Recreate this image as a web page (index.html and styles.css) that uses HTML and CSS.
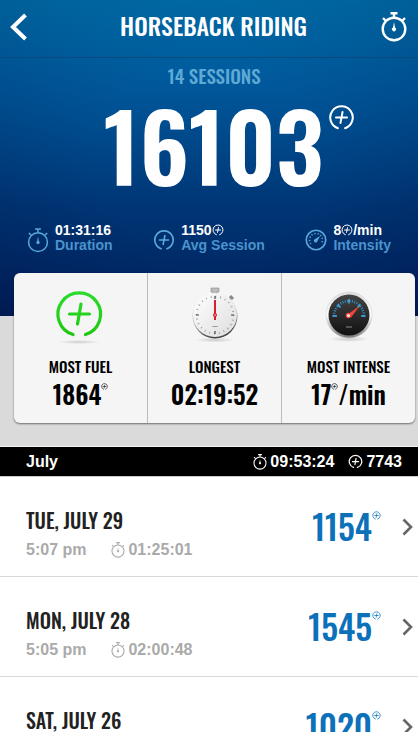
FILE: index.html
```html
<!DOCTYPE html>
<html lang="en">
<head>
    <meta charset="UTF-8">
    <meta name="viewport" content="width=device-width, initial-scale=1.0">
    <title>Horseback Riding</title>
    <link rel="stylesheet" href="styles.css">
</head>
<body>
    <!-- Shared icons -->
    <svg class="icon-defs" width="0" height="0" aria-hidden="true">
        <symbol id="fuel" viewBox="0 0 24 24">
            <path d="M8.8 21.5A10 10 0 1 1 15.2 21.5M12.9 7.2L11.1 16.8M7.1 12H16.9" fill="none" stroke="currentColor" stroke-linecap="round"/>
        </symbol>
        <symbol id="timer" viewBox="0 0 26 30">
            <circle cx="13" cy="17" r="11.3" fill="none" stroke="currentColor"/>
            <path d="M9.5 1.2H16.5M13 1.5V5M4.5 8.5L2 6M21.5 8.5L24 6" fill="none" stroke="currentColor"/>
            <path d="M13 10L14 15.5A2 2 0 1 1 12 15.5Z" fill="currentColor" stroke="none"/>
        </symbol>
        <symbol id="gauge" viewBox="0 0 24 24">
            <circle cx="12" cy="12" r="10.6" fill="none" stroke="currentColor" stroke-width="1.8"/>
            <path d="M6.5 16.2A7 7 0 1 1 17.5 16.2" fill="none" stroke="currentColor" stroke-width="1.8" stroke-dasharray="1.3 2.1"/>
            <path d="M16.5 7.5L13.6 13.2A2 2 0 1 1 11 10.8Z" fill="currentColor"/>
        </symbol>
    </svg>

    <div class="hero">
        <div class="header">
            <button class="icon-button" type="button" aria-label="Back">
                <svg width="18" height="28" viewBox="0 0 18 28"><path d="M15.5 2L3 14L15.5 26" fill="none" stroke="currentColor" stroke-width="4"/></svg>
            </button>
            <h1>HORSEBACK RIDING</h1>
            <button class="icon-button" type="button" aria-label="Start timer">
                <svg class="timer-large" width="26" height="30"><use href="#timer"/></svg>
            </button>
        </div>

        <p class="sessions">14 SESSIONS</p>
        <div class="total">
            <span>16103</span>
            <svg class="total-icon" width="27" height="27"><use href="#fuel"/></svg>
        </div>

        <div class="stats">
            <div class="stat">
                <svg class="stat-icon" width="22" height="25"><use href="#timer"/></svg>
                <p><strong>01:31:16</strong>Duration</p>
            </div>
            <div class="stat">
                <svg class="stat-icon" width="22" height="22"><use href="#fuel"/></svg>
                <p><strong>1150<svg class="inline-icon" width="12" height="12"><use href="#fuel"/></svg></strong>Avg Session</p>
            </div>
            <div class="stat">
                <svg class="stat-icon" width="22" height="22"><use href="#gauge"/></svg>
                <p><strong>8<svg class="inline-icon" width="12" height="12"><use href="#fuel"/></svg>/min</strong>Intensity</p>
            </div>
        </div>
    </div>

    <div class="records">
        <div class="card">
            <div class="record">
                <svg width="60" height="62" viewBox="0 0 60 62">
                    <defs>
                        <linearGradient id="green" gradientUnits="userSpaceOnUse" x1="0" y1="7" x2="0" y2="52"><stop offset="0" stop-color="#2bdc2b"/><stop offset="1" stop-color="#1fc80f"/></linearGradient>
                        <radialGradient id="shade"><stop offset="0" stop-color="#ccc"/><stop offset="1" stop-color="#f5f5f5"/></radialGradient>
                    </defs>
                    <ellipse cx="28" cy="58" rx="22" ry="2" fill="url(#shade)"/>
                    <path d="M22 50.5A21.3 21.3 0 1 1 34.5 50.5M30 20L26.5 40M18.5 30H38.5" fill="none" stroke="url(#green)" stroke-width="3.2" stroke-linecap="round"/>
                </svg>
                <h2>MOST FUEL</h2>
                <div class="record-value">1864<svg class="sup-icon" width="7" height="7"><use href="#fuel"/></svg></div>
            </div>
            <div class="record">
                <svg width="60" height="62" viewBox="0 0 60 62">
                    <defs>
                        <linearGradient id="steel" x1="0" y1="0" x2="0.4" y2="1"><stop offset="0" stop-color="#eee"/><stop offset="0.6" stop-color="#bbb"/><stop offset="1" stop-color="#444"/></linearGradient>
                        <linearGradient id="face" x1="0" y1="0" x2="1" y2="1"><stop offset="0" stop-color="#fff"/><stop offset="1" stop-color="#ddd"/></linearGradient>
                    </defs>
                    <ellipse cx="30" cy="56" rx="20" ry="2.5" fill="url(#shade)"/>
                    <path d="M26 4H34V8H32V11H28V8H26Z" fill="#bbb" stroke="#888" stroke-width="0.6"/>
                    <path d="M44 16L47 13" stroke="#bbb" stroke-width="2"/>
                    <path d="M45 12L48 15" stroke="#888" stroke-width="3"/>
                    <circle cx="30" cy="32" r="22.5" fill="url(#steel)"/>
                    <circle cx="30" cy="31" r="22" fill="url(#face)"/>
                    <circle cx="30" cy="31" r="18.5" fill="none" stroke="#888" stroke-width="2" stroke-dasharray="0.7 4.143"/>
                    <path d="M30 12V15M30 47V50M11 31H14M46 31H49" stroke="#444" stroke-width="1.2"/>
                    <path d="M27.5 42.5H32.5" stroke="#999" stroke-width="1"/>
                    <path d="M30 16V36" stroke="#d91e2e" stroke-width="2"/>
                    <circle cx="30" cy="31" r="2" fill="#d91e2e"/>
                    <circle cx="30" cy="31" r="0.7" fill="#fff"/>
                </svg>
                <h2>LONGEST</h2>
                <div class="record-value">02:19:52</div>
            </div>
            <div class="record">
                <svg width="60" height="62" viewBox="0 0 60 62">
                    <defs>
                        <linearGradient id="rim" x1="0" y1="0" x2="0" y2="1"><stop offset="0" stop-color="#ddd"/><stop offset="0.5" stop-color="#fff"/><stop offset="1" stop-color="#777"/></linearGradient>
                        <linearGradient id="dial" x1="0" y1="0" x2="0" y2="1"><stop offset="0" stop-color="#444"/><stop offset="1" stop-color="#111"/></linearGradient>
                    </defs>
                    <ellipse cx="30" cy="55" rx="20" ry="3" fill="url(#shade)"/>
                    <circle cx="30" cy="31" r="23" fill="url(#rim)" stroke="#ccc" stroke-width="0.5"/>
                    <circle cx="30" cy="31" r="20.5" fill="url(#dial)"/>
                    <path d="M15 32A15 15 0 1 1 45 32" fill="none" stroke="#2c9ad6" stroke-width="2.5" stroke-dasharray="0.9 1.5"/>
                    <path d="M13.5 32H18M46.5 32H42M30 15V19.5M18.5 20.5L21.5 23.5M41.5 20.5L38.5 23.5" stroke="#41b1ec" stroke-width="1.5"/>
                    <path d="M41 21.5L32 33.5L28.5 30.5Z" fill="#f0453a"/>
                    <circle cx="29.5" cy="31.5" r="2.8" fill="#f0453a"/>
                    <circle cx="29.5" cy="31.5" r="1.5" fill="#eee"/>
                    <path d="M27 43H33" stroke="#888" stroke-width="1"/>
                </svg>
                <h2>MOST INTENSE</h2>
                <div class="record-value">17<svg class="sup-icon" width="7" height="7"><use href="#fuel"/></svg>/min</div>
            </div>
        </div>
    </div>

    <div class="month">
        <h2>July</h2>
        <span class="month-time"><svg width="14" height="16"><use href="#timer"/></svg>09:53:24</span>
        <span class="month-fuel"><svg width="15" height="15"><use href="#fuel"/></svg>7743</span>
    </div>

    <div class="session-list">
        <a class="session" href="#">
            <div class="session-info">
                <h3>TUE, JULY 29</h3>
                <p><span class="session-time">5:07 pm</span><svg width="14" height="16"><use href="#timer"/></svg>01:25:01</p>
            </div>
            <div class="session-fuel">1154<svg width="9" height="9"><use href="#fuel"/></svg></div>
            <svg class="chevron" width="11" height="18" viewBox="0 0 11 18"><path d="M1.5 1.5L9 9L1.5 16.5" fill="none" stroke="currentColor" stroke-width="2.6"/></svg>
        </a>
        <a class="session" href="#">
            <div class="session-info">
                <h3>MON, JULY 28</h3>
                <p><span class="session-time">5:05 pm</span><svg width="14" height="16"><use href="#timer"/></svg>02:00:48</p>
            </div>
            <div class="session-fuel">1545<svg width="9" height="9"><use href="#fuel"/></svg></div>
            <svg class="chevron" width="11" height="18" viewBox="0 0 11 18"><path d="M1.5 1.5L9 9L1.5 16.5" fill="none" stroke="currentColor" stroke-width="2.6"/></svg>
        </a>
        <a class="session" href="#">
            <div class="session-info">
                <h3>SAT, JULY 26</h3>
            </div>
            <div class="session-fuel">1020<svg width="9" height="9"><use href="#fuel"/></svg></div>
            <svg class="chevron" width="11" height="18" viewBox="0 0 11 18"><path d="M1.5 1.5L9 9L1.5 16.5" fill="none" stroke="currentColor" stroke-width="2.6"/></svg>
        </a>
    </div>
</body>
</html>
```
FILE: styles.css
```css
* {
    box-sizing: border-box;
}

body {
    margin: 0;
    font-family: "Liberation Sans", Arial, sans-serif;
    font-weight: bold;
    background-color: #fff;
    scrollbar-width: none;
}

h1, h2, h3, p {
    margin: 0;
}

svg {
    flex: none;
}

.icon-defs {
    position: absolute;
}

/* Condensed headings and numbers */
h1, h3, .sessions, .total, .record h2, .record-value, .session-fuel {
    font-family: "Oswald", "Roboto Condensed", "Liberation Sans", sans-serif;
    font-weight: 500;
}

/* Blue top part */
.hero {
    height: 316px;
    color: #fff;
    background: radial-gradient(ellipse at 50% 50%, rgba(0, 60, 120, 0.1) 40%, rgba(0, 5, 50, 0.2)), linear-gradient(#0076b2, #005a9e 28%, #003575 65%, #001f5a);
}

.header {
    display: flex;
    align-items: center;
    height: 58px;
    padding: 0 8px 4px 3px;
    border-bottom: 1px solid #0a4a7c;
}

.header h1 {
    flex: 1;
    padding: 0 0 4px 14px;
    font-size: 24px;
    line-height: 28px;
    text-align: center;
}

.icon-button {
    display: flex;
    padding: 0;
    border: none;
    background: none;
    color: #fff;
    cursor: pointer;
    width: 32px;
    justify-content: center;
}

.timer-large {
    stroke-width: 2.4px;
}

.sessions {
    padding: 4px 0 0 10px;
    font-size: 19px;
    line-height: 26px;
    text-align: center;
    color: #5fa9d6;
}

.total {
    display: flex;
    justify-content: center;
    padding-left: 40px;
    font-size: 94px;
    line-height: 112px;
}

.total span {
    font-weight: 600;
}

.total-icon {
    margin-top: 16px;
    margin-left: 4px;
    stroke-width: 1.8px;
}

.stats {
    display: flex;
    justify-content: space-between;
    padding: 23px 27px 0;
}

.stat {
    display: flex;
    align-items: center;
    gap: 6px;
    font-size: 14px;
    line-height: 15px;
    color: #4b93cc;
}

.stat strong {
    display: block;
    color: #fff;
}

.stat-icon {
    margin-top: 4px;
    color: #5aa9de;
    stroke-width: 1.8px;
}

.inline-icon {
    vertical-align: -1px;
    stroke-width: 2px;
}

/* Records card, pulled up over the blue part */
.records {
    display: flex;
    height: 130px;
    padding: 0 3px 0 14px;
    background-color: #dadada;
}

.card {
    display: flex;
    flex: 1;
    height: 150px;
    margin-top: -43px;
    border-radius: 6px;
    background-color: #f5f5f5;
    box-shadow: 0 1px 2px rgba(0, 0, 0, 0.5);
}

.record {
    display: flex;
    flex: 1;
    flex-direction: column;
    align-items: center;
    padding-top: 11px;
    color: #000;
}

.record + .record {
    border-left: 1px solid #bbb;
}

.record h2 {
    margin-top: 9px;
    font-size: 15px;
    line-height: 22px;
}

.record-value {
    display: flex;
    font-size: 25px;
    font-weight: 600;
    line-height: 34px;
}

.sup-icon {
    margin-top: 6px;
    stroke-width: 2px;
}

/* Month bar */
.month {
    display: flex;
    align-items: center;
    height: 31px;
    padding: 0 16px 0 26px;
    border-top: 1px solid #f5f5f5;
    border-bottom: 1px solid #ccc;
    background-color: #000;
    color: #fff;
    font-size: 16px;
}

.month h2 {
    flex: 1;
    font-size: 16px;
}

.month span {
    display: flex;
    align-items: center;
    gap: 3px;
    stroke-width: 2px;
}

.month-fuel {
    margin-left: 14px;
}

/* Sessions */
.session {
    display: flex;
    height: 100px;
    padding: 28px 5px 0 26px;
    border-bottom: 1px solid #d8d8d8;
    color: #222;
    text-decoration: none;
}

.session-info {
    flex: 1;
}

.session h3 {
    font-size: 20px;
    line-height: 30px;
}

.session-info p {
    display: flex;
    align-items: center;
    gap: 3px;
    font-size: 16px;
    line-height: 30px;
    color: #aaa;
    stroke-width: 2px;
}

.session-time {
    margin-right: 22px;
}

.session-fuel {
    display: flex;
    font-size: 34px;
    line-height: 42px;
    color: #0c71b8;
    stroke-width: 2px;
}

.session-fuel svg {
    margin-top: 6px;
}

.chevron {
    margin: 13px 0 0 21px;
    color: #666;
}
```
